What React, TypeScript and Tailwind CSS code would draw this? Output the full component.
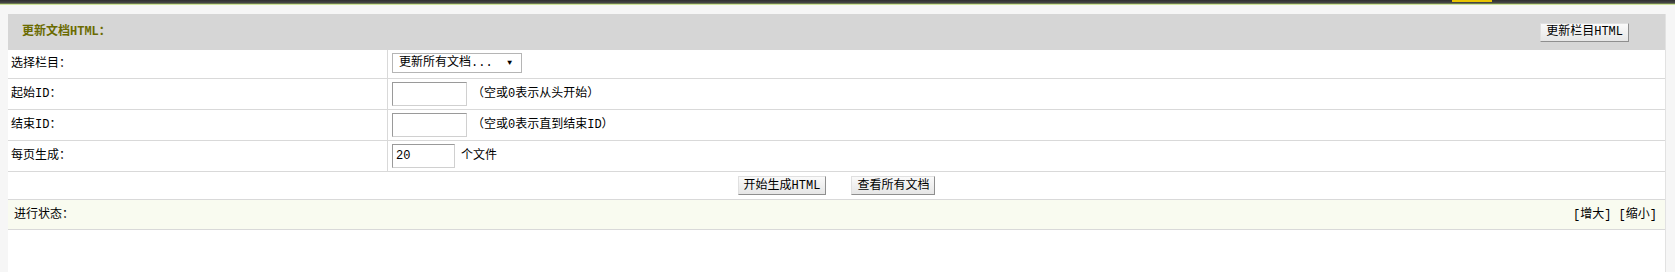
const font = "font-['Liberation_Mono','Noto_Sans_CJK_SC',monospace]";

function Btn({ children }: { children: React.ReactNode }) {
  return (
    <button
      className={`h-[19px] px-[5px] text-[12px] leading-none text-black bg-gradient-to-b from-[#fafafa] to-[#e6e6e6] border border-t-[#e0e0e0] border-l-[#e0e0e0] border-r-[#8f8f8f] border-b-[#8f8f8f] ${font}`}
    >
      {children}
    </button>
  );
}

function Row({
  label,
  children,
  h,
}: {
  label: string;
  children: React.ReactNode;
  h: string;
}) {
  return (
    <div className={`flex ${h} border-b border-[#d9d9d9]`}>
      <div className="w-[380px] shrink-0 flex items-center pl-[3px] border-r border-[#d9d9d9]">
        {label}
      </div>
      <div className="flex-1 flex items-center pl-[4px]">{children}</div>
    </div>
  );
}

export default function App() {
  return (
    <div className={`w-[1675px] h-[272px] bg-[#f6f6f6] overflow-hidden text-[12px] text-black ${font}`}>
      {/* top strip */}
      <div className="relative h-[5px] bg-gradient-to-b from-[#2e2e2e] via-[#444] to-[#a8c95a]">
        <div className="absolute left-[1452px] top-0 w-[40px] h-[2px] bg-[#e8c400]" />
        <div className="absolute left-0 bottom-0 w-full h-[1px] bg-[#cfe39a]" />
      </div>

      <div className="ml-[8px] mt-[9px] w-[1658px] bg-white border-r border-[#e2e2e2]">
        {/* header */}
        <div className="h-[36px] bg-[#d6d6d6] flex items-center justify-between pl-[14px] pr-[36px]">
          <span className="font-bold text-[#6b6b00]">更新文档HTML：</span>
          <Btn>更新栏目HTML</Btn>
        </div>

        <Row label="选择栏目：" h="h-[29px]">
          <div className="w-[130px] h-[20px] border border-[#b5b5b5] bg-white flex items-center justify-between pl-[6px] pr-[9px] mt-[-2px]">
            <span>更新所有文档...</span>
            <span className="text-[8px]">▼</span>
          </div>
        </Row>
        <Row label="起始ID：" h="h-[31px]">
          <input className="w-[75px] h-[24px] border border-t-[#9a9a9a] border-l-[#9a9a9a] border-r-[#d0d0d0] border-b-[#d0d0d0] outline-none" />
          <span className="ml-[5px]">（空或0表示从头开始）</span>
        </Row>
        <Row label="结束ID：" h="h-[31px]">
          <input className="w-[75px] h-[24px] border border-t-[#9a9a9a] border-l-[#9a9a9a] border-r-[#d0d0d0] border-b-[#d0d0d0] outline-none" />
          <span className="ml-[5px]">（空或0表示直到结束ID）</span>
        </Row>
        <Row label="每页生成：" h="h-[31px]">
          <input
            defaultValue="20"
            className="w-[63px] h-[24px] pl-[3px] text-[12px] border border-t-[#9a9a9a] border-l-[#9a9a9a] border-r-[#d0d0d0] border-b-[#d0d0d0] outline-none"
          />
          <span className="ml-[6px]">个文件</span>
        </Row>

        <div className="h-[28px] border-b border-[#d9d9d9] flex items-center justify-center gap-[25px]">
          <Btn>开始生成HTML</Btn>
          <Btn>查看所有文档</Btn>
        </div>

        <div className="h-[30px] bg-[#f9fbf0] border-b border-[#d9d9d9] flex items-center justify-between pl-[6px] pr-[8px]">
          <span>进行状态：</span>
          <span>[增大] [缩小]</span>
        </div>

        <div className="h-[60px] bg-white" />
      </div>
    </div>
  );
}
